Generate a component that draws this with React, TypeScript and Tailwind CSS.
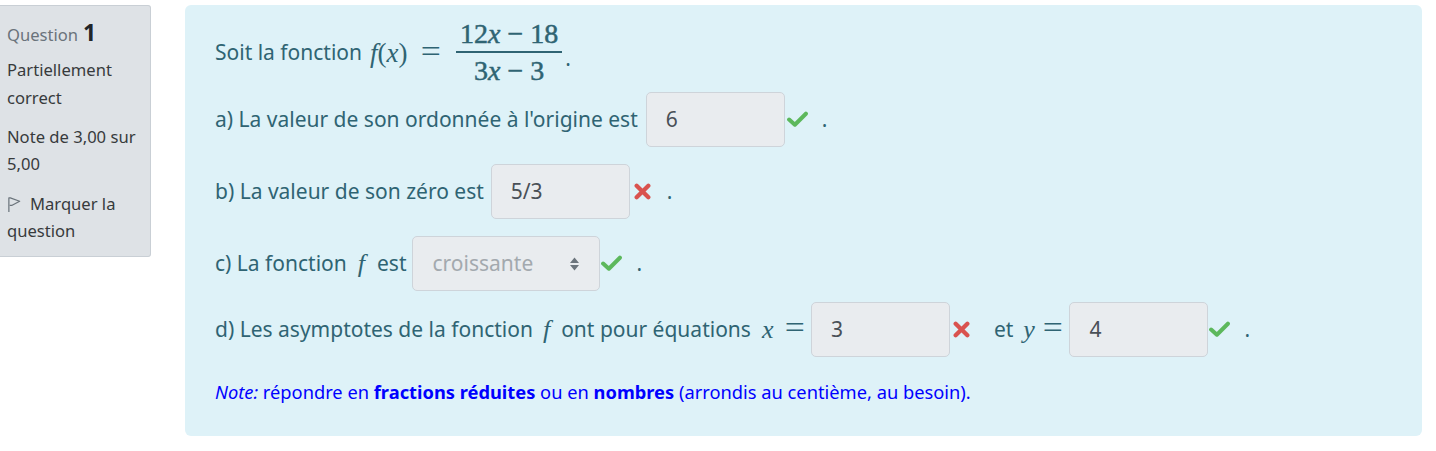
import React from "react";

const mathFont = { fontFamily: '"Liberation Serif", "DejaVu Serif", serif' };

function Check() {
  return (
    <svg viewBox="0 0 20 16" className="w-[21px] h-[17px] shrink-0">
      <polyline
        points="2,8 7.5,13 18,2.5"
        fill="none"
        stroke="#5cb85c"
        strokeWidth={3.8}
        strokeLinecap="round"
        strokeLinejoin="round"
      />
    </svg>
  );
}

function Cross() {
  return (
    <svg viewBox="0 0 16 16" className="w-[17px] h-[17px] shrink-0">
      <g stroke="#d9534f" strokeWidth={4} strokeLinecap="round">
        <line x1="2.5" y1="2.5" x2="13.5" y2="13.5" />
        <line x1="13.5" y1="2.5" x2="2.5" y2="13.5" />
      </g>
    </svg>
  );
}

function Answer({ value }: { value: string }) {
  return (
    <div className="w-[139px] h-[55px] shrink-0 flex items-center pl-[19px] bg-[#e9ecef] border border-[#ced4da] rounded-[5px] text-[#495057]">
      {value}
    </div>
  );
}

function V({ children }: { children: React.ReactNode }) {
  return (
    <span className="italic text-[26px]" style={mathFont}>
      {children}
    </span>
  );
}

function Eq() {
  return <span className="text-[31px] leading-none scale-x-[1.15] inline-block">=</span>;
}

function Flag() {
  return (
    <svg viewBox="0 0 16 18" className="w-[15px] h-[17px] inline-block mr-[8px] -mt-[3px] align-middle">
      <path
        d="M2 17V2h1.5l10 3.5-8.5 4.5L3 10"
        fill="none"
        stroke="#6a737b"
        strokeWidth={1.3}
        strokeLinejoin="round"
      />
    </svg>
  );
}

function InfoBox() {
  return (
    <div className="w-[151px] h-[252px] mt-[5px] shrink-0 bg-[#dee2e6] border border-l-0 border-[#c9cfd5] rounded-r-[3px] pl-[7px] pr-[4px] pt-[13px] text-[16.6px] leading-[27px] text-[#373a3c]">
      <div className="flex items-baseline gap-[5px] mb-[8px]">
        <span className="text-[#6a737b]">Question</span>
        <span className="text-[23px] font-bold text-[#212529]">1</span>
      </div>
      <p className="mb-[12px] leading-[27.5px]">Partiellement correct</p>
      <p className="mb-[13px]">Note de 3,00 sur 5,00</p>
      <p>
        <Flag />
        Marquer la question
      </p>
    </div>
  );
}

export default function App() {
  return (
    <div
      className="w-[1436px] h-[451px] bg-white flex gap-[34px]"
      style={{ fontFamily: '"Noto Sans", "Open Sans", sans-serif' }}
    >
      <InfoBox />
      <div className="w-[1237px] h-[431px] mt-[5px] bg-[#def2f8] rounded-[6px] pl-[30px] pt-[13px] text-[21px] text-[#2f6473]">
        <div className="h-[70px] flex items-center">
          <span>Soit la fonction</span>
          <span className="ml-[8px] text-[27px] flex items-center" style={mathFont}>
            <span className="italic">f</span>
            <span>(</span>
            <span className="italic">x</span>
            <span>)</span>
            <span className="ml-[14px] mr-[17px]">
              <Eq />
            </span>
          </span>
          <span
            className="flex flex-col items-center -mt-[3px] text-[28px] leading-[29px] [-webkit-text-stroke:0.5px_#2f6473]"
            style={mathFont}
          >
            <span className="px-[4px] pb-[3px]">
              12<span className="italic">x</span> − 18
            </span>
            <span className="w-full h-[2px] bg-[#2f6473]" />
            <span className="px-[4px] pt-[3px]">
              3<span className="italic">x</span> − 3
            </span>
          </span>
          <span className="ml-[3px] mt-[12px]">.</span>
        </div>

        <div className="mt-[4px] h-[55px] flex items-center">
          <span className="mr-[8px]">a) La valeur de son ordonnée à l'origine est</span>
          <Answer value="6" />
          <span className="ml-[2px]">
            <Check />
          </span>
          <span className="ml-[14px]">.</span>
        </div>

        <div className="mt-[17px] h-[55px] flex items-center">
          <span className="mr-[7px]">b) La valeur de son zéro est</span>
          <Answer value="5/3" />
          <span className="ml-[4px]">
            <Cross />
          </span>
          <span className="ml-[16px]">.</span>
        </div>

        <div className="mt-[17px] h-[55px] flex items-center">
          <span>c) La fonction</span>
          <span className="ml-[11px] mr-[12px]">
            <V>f</V>
          </span>
          <span className="mr-[6px]">est</span>
          <div className="w-[188px] h-[55px] shrink-0 flex items-center justify-between pl-[19px] pr-[19px] bg-[#e9ecef] border border-[#ced4da] rounded-[5px] text-[#a3a9ae]">
            <span>croissante</span>
            <svg viewBox="0 0 10 14" className="w-[11px] h-[14px]">
              <path d="M5 0.5 9.5 6h-9z M5 13.5 9.5 8h-9z" fill="#6c757d" />
            </svg>
          </div>
          <span className="ml-[1px]">
            <Check />
          </span>
          <span className="ml-[14px]">.</span>
        </div>

        <div className="mt-[11px] h-[55px] flex items-center">
          <span>d) Les asymptotes de la fonction</span>
          <span className="ml-[10px] mr-[11px]">
            <V>f</V>
          </span>
          <span>ont pour équations</span>
          <span className="ml-[11px] mr-[7px] flex items-center" style={mathFont}>
            <span className="italic text-[26px]">x</span>
            <span className="ml-[13px]">
              <Eq />
            </span>
          </span>
          <Answer value="3" />
          <span className="ml-[3px]">
            <Cross />
          </span>
          <span className="ml-[24px]">et</span>
          <span className="ml-[10px] mr-[8px] flex items-center" style={mathFont}>
            <span className="italic text-[26px]">y</span>
            <span className="ml-[9px]">
              <Eq />
            </span>
          </span>
          <Answer value="4" />
          <span className="ml-[1px]">
            <Check />
          </span>
          <span className="ml-[14px]">.</span>
        </div>

        <p className="mt-[21px] leading-[28px] text-[18.3px] text-[#0000ff]">
          <em>Note:</em> répondre en <strong>fractions réduites</strong> ou en{" "}
          <strong>nombres</strong> (arrondis au centième, au besoin).
        </p>
      </div>
    </div>
  );
}
